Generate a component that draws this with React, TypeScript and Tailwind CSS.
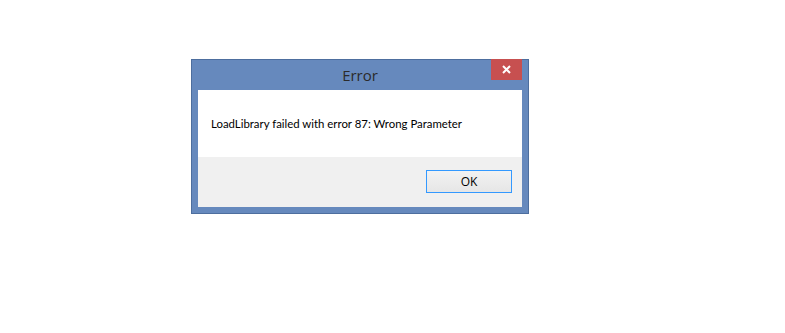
export default function App() {
  return (
    <div className="h-[333px] w-[785px] bg-white pl-[191px] pt-[59px]">
      {/* Dialog window */}
      <div className="w-[338px] border border-[#4d6e9e] bg-[#6689bd] px-[6px] pb-[6px]">
        {/* Title bar */}
        <div className="relative flex h-[30px] items-center justify-center">
          <span className="font-['Open_Sans',sans-serif] text-[15px] text-[#2b2b2b]">Error</span>
          <div className="absolute right-[0px] top-[-1px] flex h-[21px] w-[31px] items-center justify-center bg-[#c75050]">
            <svg width="9" height="9" viewBox="0 0 9 9">
              <path d="M1 1 L8 8 M8 1 L1 8" stroke="#ffffff" strokeWidth="2" />
            </svg>
          </div>
        </div>
        {/* Client area */}
        <div className="flex h-[117px] flex-col">
          <div className="flex h-[67px] items-center bg-white pl-[13px] pt-[1px]">
            <span className="font-['Lato',sans-serif] text-[11.4px] text-black">
              LoadLibrary failed with error 87: Wrong Parameter
            </span>
          </div>
          <div className="flex flex-1 items-start justify-end bg-[#f0f0f0] pr-[10px] pt-[13px]">
            <button className="h-[23px] w-[86px] border border-[#3399ff] bg-gradient-to-b from-[#f2f2f2] to-[#e6e6e6] font-['Open_Sans',sans-serif] text-[12px] text-black">
              OK
            </button>
          </div>
        </div>
      </div>
    </div>
  );
}
